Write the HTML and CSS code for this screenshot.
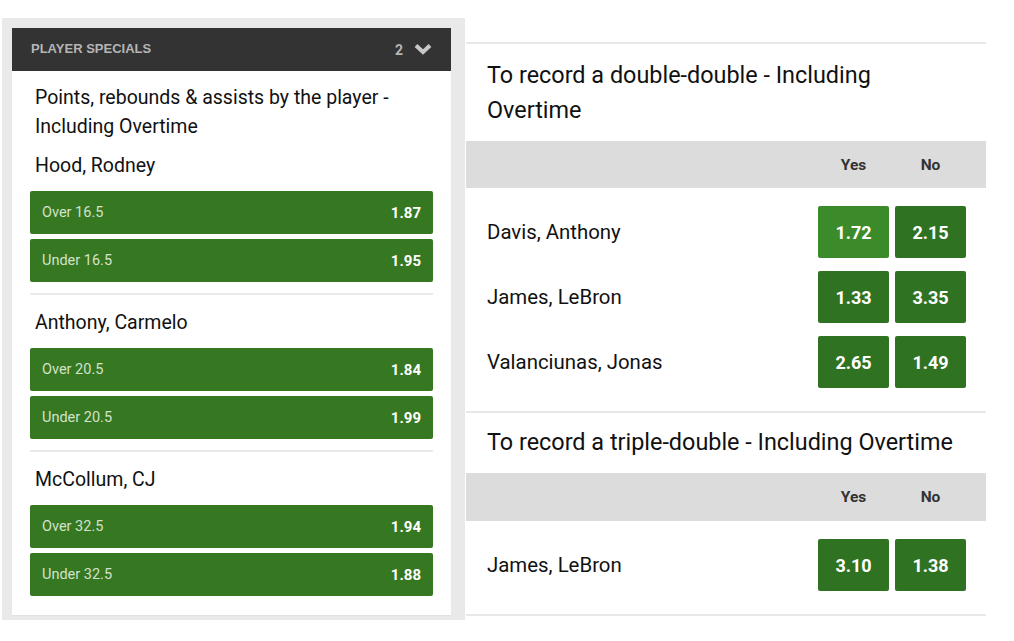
FILE: index.html
```html
<!DOCTYPE html>
<html lang="en">
<head>
  <meta charset="UTF-8" />
  <title>Player specials</title>
  <link rel="stylesheet" href="styles.css">
</head>
<body>
  <div class="page">
    <div class="panel">
      <div class="panel-head">
        <span class="panel-title">PLAYER SPECIALS</span>
        <span class="panel-count">2
          <svg class="chevron" width="18" height="12" viewBox="0 0 18 12">
            <path d="M2 2.5 L9 9 L16 2.5" fill="none" stroke="#c8c8c8" stroke-width="4" stroke-linejoin="miter"/>
          </svg>
        </span>
      </div>
      <div class="card">
        <div class="market-title">Points, rebounds &amp; assists by the player - Including Overtime</div>

        <div class="group first">
          <div class="player">Hood, Rodney</div>
          <div class="bet"><span>Over 16.5</span><b>1.87</b></div>
          <div class="bet"><span>Under 16.5</span><b>1.95</b></div>
        </div>
        <div class="group">
          <div class="player">Anthony, Carmelo</div>
          <div class="bet"><span>Over 20.5</span><b>1.84</b></div>
          <div class="bet"><span>Under 20.5</span><b>1.99</b></div>
        </div>
        <div class="group last">
          <div class="player">McCollum, CJ</div>
          <div class="bet"><span>Over 32.5</span><b>1.94</b></div>
          <div class="bet"><span>Under 32.5</span><b>1.88</b></div>
        </div>
      </div>
    </div>

    <div class="markets">
      <div class="market">
        <div class="market-name">To record a double-double - Including Overtime</div>
        <div class="yes-no"><span>Yes</span><span>No</span></div>
        <div class="rows">
          <div class="row">
            <span class="name">Davis, Anthony</span>
            <span class="odd hover">1.72</span><span class="odd">2.15</span>
          </div>
          <div class="row">
            <span class="name">James, LeBron</span>
            <span class="odd">1.33</span><span class="odd">3.35</span>
          </div>
          <div class="row">
            <span class="name">Valanciunas, Jonas</span>
            <span class="odd">2.65</span><span class="odd">1.49</span>
          </div>
        </div>
      </div>
      <div class="market">
        <div class="market-name">To record a triple-double - Including Overtime</div>
        <div class="yes-no"><span>Yes</span><span>No</span></div>
        <div class="rows">
          <div class="row">
            <span class="name">James, LeBron</span>
            <span class="odd">3.10</span><span class="odd">1.38</span>
          </div>
        </div>
      </div>
    </div>
  </div>
</body>
</html>
```

FILE: styles.css
```css
body {
  margin: 0;
  background: #fff;
  font-family: Roboto, "Liberation Sans", Arial, sans-serif;
  color: #111;
}
.page {
  display: flex;
  align-items: flex-start;
  padding-left: 2px;
}

/* left column */
.panel {
  width: 439px;
  margin-top: 18px;
  padding: 10px 14px 4px 10px;
  background: #e9e9e9;
}
.panel-head {
  display: flex;
  align-items: center;
  justify-content: space-between;
  height: 43px;
  padding: 0 19px;
  background: #333;
  color: #b5b5b5;
}
.panel-title {
  font-family: "Liberation Sans", Arial, sans-serif;
  font-weight: bold;
  font-size: 13px;
  margin-top: -3px;
}
.panel-count {
  display: flex;
  align-items: center;
  gap: 11px;
  font-size: 14px;
  font-weight: bold;
  margin-top: 1px;
}
.chevron {
  margin-top: -2px;
}
.card {
  background: #fff;
  padding: 0 18px 19px;
  border-bottom: 1px solid #e2e2e2;
}
.market-title {
  padding: 12px 5px 0;
  font-size: 19.5px;
  line-height: 29px;
}
.group {
  padding: 13px 0 11px;
  border-bottom: 2px solid #eaeaea;
}
.group.first {
  padding-top: 10px;
}
.group.last {
  padding-bottom: 0;
  border-bottom: none;
}
.player {
  padding-left: 5px;
  margin-bottom: 11px;
  font-size: 19.5px;
  line-height: 29px;
}
.bet {
  display: flex;
  align-items: center;
  justify-content: space-between;
  height: 43px;
  padding: 0 12px;
  margin-bottom: 5px;
  background: #367722;
  border-radius: 2px;
  color: #d3e2ca;
  font-size: 14.5px;
}
.bet:last-child {
  margin-bottom: 0;
}
.bet b {
  color: #fff;
  font-size: 15px;
}

/* right column */
.markets {
  width: 520px;
  margin-top: 42px;
  margin-left: 1px;
}
.market {
  border-top: 2px solid #e8e8e8;
}
.market:last-child {
  border-bottom: 2px solid #e8e8e8;
}
.market-name {
  padding: 14px 24px 13px 21px;
  font-size: 23.4px;
  line-height: 35px;
}
.market:last-child .market-name {
  padding-top: 12px;
  padding-bottom: 13px;
}
.yes-no {
  display: flex;
  justify-content: flex-end;
  align-items: center;
  gap: 6px;
  height: 47px;
  padding-right: 20px;
  background: #dcdcdc;
  color: #333;
  font-size: 15.5px;
  font-weight: bold;
}
.market:last-child .yes-no {
  height: 48px;
}
.yes-no span {
  width: 71px;
  text-align: center;
}
.rows {
  display: flex;
  flex-direction: column;
  gap: 13px;
  padding: 18px 20px 23px 21px;
}
.row {
  display: flex;
  align-items: center;
  gap: 6px;
  height: 52px;
}
.name {
  flex: 1;
  font-size: 20.4px;
}
.odd {
  display: flex;
  align-items: center;
  justify-content: center;
  width: 71px;
  height: 52px;
  background: #2f7322;
  border-radius: 2px;
  color: #fff;
  font-size: 18px;
  font-weight: bold;
}
.odd.hover {
  background: #3c8b2b;
}
```
